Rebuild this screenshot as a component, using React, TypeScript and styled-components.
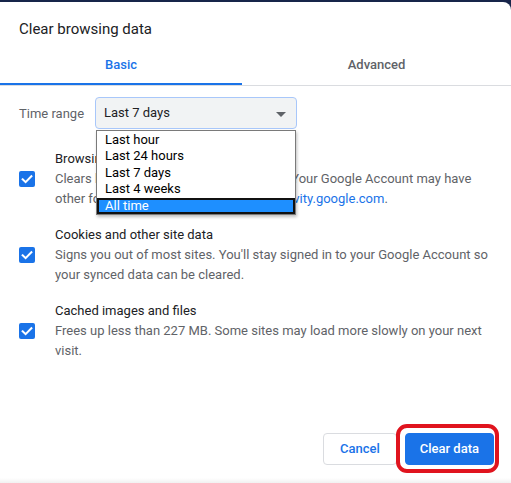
import React from 'react';
import styled, { createGlobalStyle } from 'styled-components';

const GlobalStyle = createGlobalStyle`
    html, body {
        margin: 0;
        padding: 0;
        background: #17254a;
        font-family: Roboto, 'Liberation Sans', Arial, sans-serif;
        -webkit-font-smoothing: antialiased;
    }
`;

const TIME_RANGES = ['Last hour', 'Last 24 hours', 'Last 7 days', 'Last 4 weeks', 'All time'];

const SECTIONS = [
    {
        title: 'Browsing history',
        text: 'Clears history from all signed-in devices. Your Google Account may have other forms of browsing history at ',
        link: 'myactivity.google.com',
    },
    {
        title: 'Cookies and other site data',
        text: "Signs you out of most sites. You'll stay signed in to your Google Account so your synced data can be cleared.",
    },
    {
        title: 'Cached images and files',
        text: 'Frees up less than 227 MB. Some sites may load more slowly on your next visit.',
    },
];

const CheckIcon: React.FC = () => (
    <svg width="16" height="16" viewBox="0 0 16 16">
        <path d="M3.6 8.3 L6.6 11.2 L12.4 5.2" fill="none" stroke="#fff" strokeWidth="2" strokeLinecap="square" />
    </svg>
);

const App: React.FC = () => {
    return (
        <>
            <GlobalStyle />
            <Dialog>
                <Title>Clear browsing data</Title>
                <TabBar>
                    <Tab active>Basic</Tab>
                    <Tab>Advanced</Tab>
                </TabBar>
                <RangeRow>
                    <RangeLabel>Time range</RangeLabel>
                    <SelectWrap>
                        <Select>
                            Last 7 days
                            <Arrow />
                        </Select>
                        <Options>
                            {TIME_RANGES.map((range) => (
                                <Option key={range} selected={range === 'All time'}>
                                    {range}
                                </Option>
                            ))}
                        </Options>
                    </SelectWrap>
                </RangeRow>
                <Sections>
                    {SECTIONS.map((section) => (
                        <Section key={section.title}>
                            <Checkbox>
                                <CheckIcon />
                            </Checkbox>
                            <SectionText>
                                <SectionTitle>{section.title}</SectionTitle>
                                <SectionDesc>
                                    {section.text}
                                    {section.link && (
                                        <>
                                            <Link>{section.link}</Link>.
                                        </>
                                    )}
                                </SectionDesc>
                            </SectionText>
                        </Section>
                    ))}
                </Sections>
                <Footer>
                    <Button>Cancel</Button>
                    <Highlighted>
                        <Button primary>Clear data</Button>
                        <RedRing />
                    </Highlighted>
                </Footer>
            </Dialog>
        </>
    );
};

const Dialog = styled.div`
    margin-top: 2px;
    height: 481px;
    display: flex;
    flex-direction: column;
    background: linear-gradient(to bottom, #fff calc(100% - 5px), #f1f1f1);
    border-top-right-radius: 8px;
    overflow: hidden;
`;

const Title = styled.div`
    padding: 17px 19px 6px;
    font-size: 15px;
    line-height: 20px;
    color: #202124;
`;

const TabBar = styled.div`
    display: flex;
    border-bottom: 1px solid #dadce0;
`;

const Tab = styled.div<{ active?: boolean }>`
    flex: ${(props) => (props.active ? '0 0 242px' : '1')};
    height: 40px;
    line-height: 40px;
    text-align: center;
    font-size: 13px;
    font-weight: 500;
    color: ${(props) => (props.active ? '#1a73e8' : '#5f6368')};
    box-shadow: ${(props) => (props.active ? 'inset 0 -2px 0 #1a73e8' : 'none')};
`;

const RangeRow = styled.div`
    display: flex;
    align-items: center;
    padding: 11px 19px 0;
`;

const RangeLabel = styled.div`
    width: 76px;
    font-size: 13px;
    color: #5f6368;
`;

const SelectWrap = styled.div`
    position: relative;
`;

const Select = styled.div`
    position: relative;
    box-sizing: border-box;
    width: 202px;
    height: 32px;
    padding-left: 8px;
    line-height: 30px;
    font-size: 13px;
    color: #202124;
    background: #f1f3f4;
    border: 1px solid #a8c7fa;
    border-radius: 4px;
`;

const Arrow = styled.span`
    position: absolute;
    right: 10px;
    top: 14px;
    border-left: 5px solid transparent;
    border-right: 5px solid transparent;
    border-top: 5px solid #5f6368;
`;

const Options = styled.div`
    position: absolute;
    top: 33px;
    left: 1px;
    box-sizing: border-box;
    width: 200px;
    padding-top: 1px;
    background: #fff;
    border: 1px solid #7a7a7a;
    box-shadow: 1px 2px 3px rgba(0, 0, 0, 0.25);
    z-index: 2;
`;

const Option = styled.div<{ selected?: boolean }>`
    box-sizing: border-box;
    height: 16.4px;
    padding-left: ${(props) => (props.selected ? '6px' : '8px')};
    font-size: 13px;
    line-height: ${(props) => (props.selected ? '12.4px' : '16.4px')};
    color: ${(props) => (props.selected ? '#fff' : '#000')};
    background: ${(props) => (props.selected ? '#1e8fff' : 'transparent')};
    border: ${(props) => (props.selected ? '2px solid #111' : 'none')};
`;

const Sections = styled.div`
    display: flex;
    flex-direction: column;
    gap: 16px;
    padding-top: 20px;
`;

const Section = styled.div`
    display: flex;
    align-items: center;
    padding: 0 16px 0 19px;
`;

const Checkbox = styled.div`
    flex: none;
    width: 16px;
    height: 16px;
    margin-right: 20px;
    border-radius: 2px;
    background: #1a73e8;
    display: flex;
`;

const SectionText = styled.div`
    font-size: 13px;
    line-height: 20px;
`;

const SectionTitle = styled.div`
    color: #202124;
`;

const SectionDesc = styled.div`
    color: #5f6368;
`;

const Link = styled.span`
    color: #1a73e8;
`;

const Footer = styled.div`
    margin-top: auto;
    display: flex;
    justify-content: flex-end;
    gap: 8px;
    padding: 0 17px 18px 0;
`;

const Button = styled.div<{ primary?: boolean }>`
    box-sizing: border-box;
    height: 32px;
    padding: 0 ${(props) => (props.primary ? '14px' : '16px')};
    line-height: 30px;
    font-size: 13px;
    font-weight: 500;
    border-radius: 4px;
    color: ${(props) => (props.primary ? '#fff' : '#1a73e8')};
    background: ${(props) => (props.primary ? '#1a73e8' : '#fff')};
    border: 1px solid ${(props) => (props.primary ? '#1a73e8' : '#dadce0')};
`;

const Highlighted = styled.div`
    position: relative;
`;

const RedRing = styled.div`
    position: absolute;
    top: -9px;
    bottom: -8px;
    left: -9px;
    right: -5px;
    border: 4px solid #e0141e;
    border-radius: 11px;
    pointer-events: none;
`;

export default App;
